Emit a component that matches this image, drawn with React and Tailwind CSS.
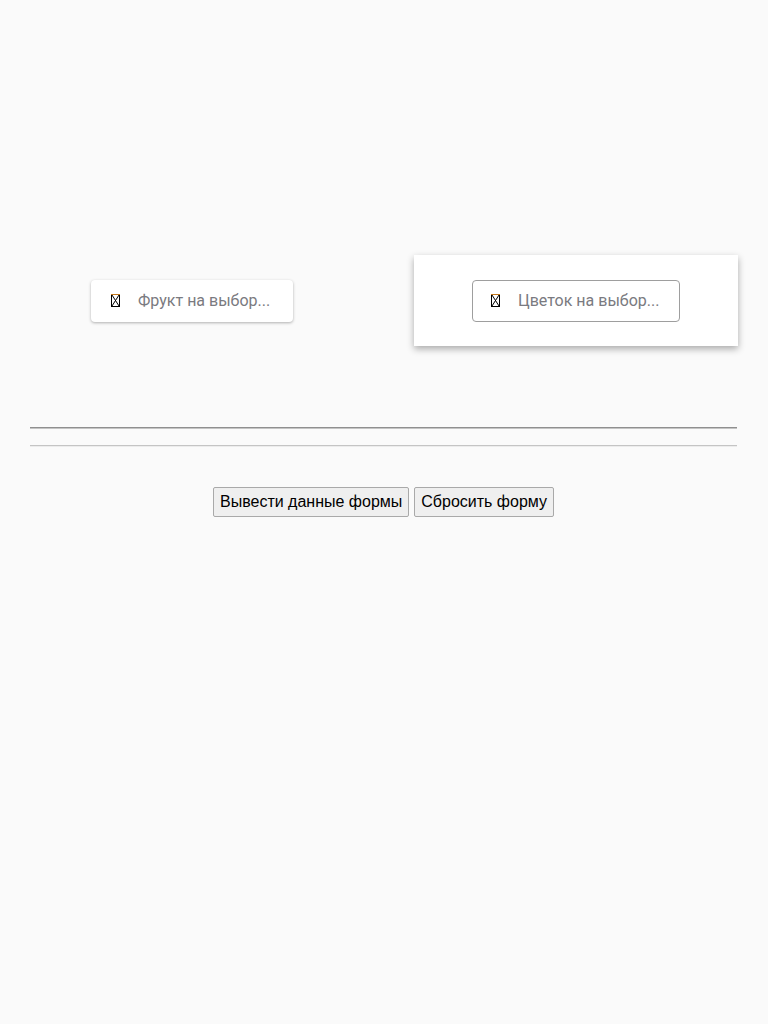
import React from 'react';

const Tofu = () => (
  <svg width="9" height="13" viewBox="0 0 9 13" className="shrink-0">
    <rect x="0.5" y="0.5" width="8" height="12" fill="none" stroke="#000" strokeWidth="1" />
    <path d="M1 1 L8 12 M8 1 L1 12" stroke="#000" strokeWidth="1" />
    <path d="M0 0.5 H9" stroke="#c77a1c" strokeWidth="1" />
  </svg>
);

const Picker = ({ label }) => (
  <div className="flex items-center">
    <Tofu />
    <span className="ml-[18px] text-[16px] text-[#7a7a80] leading-none whitespace-nowrap">{label}</span>
  </div>
);

export default function App() {
  return (
    <div className="min-h-[1024px] bg-[#fafafa] font-['Roboto',sans-serif]">
      {/* selectors row */}
      <div className="grid grid-cols-2 pt-[255px]">
        <div className="flex h-[91px] items-center justify-center">
          <div className="flex h-[42px] w-[202px] items-center rounded bg-white pl-5 shadow-[0_1px_3px_rgba(0,0,0,0.3)]">
            <Picker label="Фрукт на выбор..." />
          </div>
        </div>
        <div className="flex items-center justify-center">
          <div className="flex h-[91px] w-[324px] items-center justify-center bg-white shadow-[0_3px_7px_rgba(0,0,0,0.32)]">
            <div className="flex h-[42px] w-[208px] items-center rounded border border-[#9e9e9e] pl-[18px]">
              <Picker label="Цветок на выбор..." />
            </div>
          </div>
        </div>
      </div>

      {/* separators */}
      <div className="mx-[30px] mt-[81px] w-[707px]">
        <div className="border-t border-b border-t-[#8f8f8f] border-b-[#c4c4c4]" />
        <div className="mt-4 border-t border-b border-t-[#c4c4c4] border-b-[#ececec]" />
      </div>

      {/* actions */}
      <div className="mt-[40px] flex justify-center gap-[5px] pr-[1px] font-['Liberation_Sans',Arial,sans-serif] text-base text-black">
        <button className="h-[30px] rounded-[2px] border border-[#a9a9a9] bg-[#efefef] px-[6px]">
          Вывести данные формы
        </button>
        <button className="h-[30px] rounded-[2px] border border-[#a9a9a9] bg-[#efefef] px-[6px]">
          Сбросить форму
        </button>
      </div>
    </div>
  );
}
